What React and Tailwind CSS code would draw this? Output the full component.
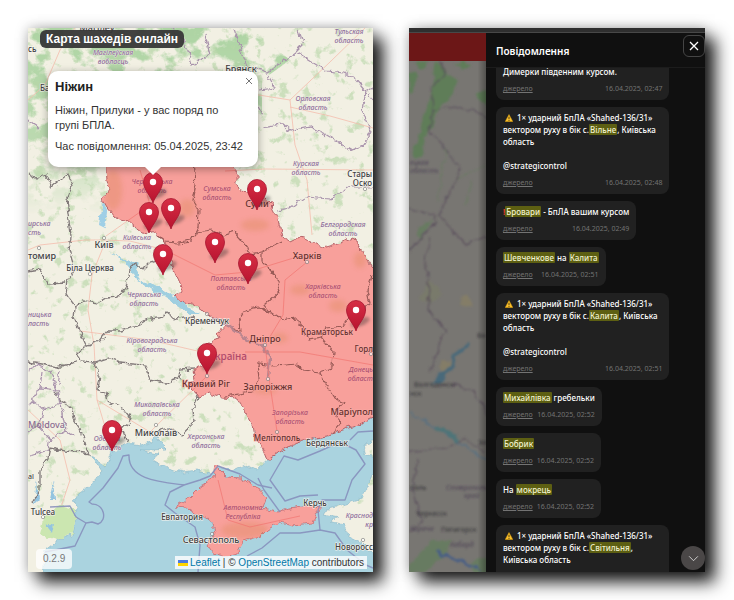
import React from "react";

const AREA = "M105 160 L107 180 L110 190 L103 200 L107 207 L115 217 L120 219 L127 220 L135 227 L142 232 L149 233 L155 231 L157 236 L164 242 L168 250 L170 258 L172 265 L175 272 L180 283 L183 292 L175 297 L182 303 L193 304 L202 310 L213 318 L225 325 L218 333 L220 338 L212 340 L207 343 L200 352 L202 366 L193 370 L195 380 L190 384 L192 390 L200 396 L210 393 L223 397 L237 398 L243 407 L248 417 L253 425 L255 437 L263 448 L268 460 L278 453 L290 445 L307 440 L327 437 L337 432 L357 425 L380 416 L380 272 L373 268 L365 255 L357 240 L352 238 L340 243 L323 248 L310 240 L300 237 L290 242 L282 237 L278 220 L272 208 L270 202 L260 192 L240 190 L237 183 L237 173 L228 160 Z";
const CRIMEA = "M215 465 L213 478 L200 487 L190 497 L183 502 L175 507 L187 508 L197 515 L205 517 L213 523 L215 533 L207 545 L213 553 L225 557 L237 553 L243 542 L260 537 L267 530 L280 522 L293 525 L313 523 L317 513 L322 507 L307 505 L290 508 L278 512 L263 508 L267 498 L253 485 L240 478 L227 477 Z";
const SEA = "M43 580 L45 550 L58 540 L72 535 L77 507 L73 500 L88 487 L102 472 L90 455 L106 466 L112 452 L128 443 L143 445 L153 440 L155 430 L158 440 L167 449 L152 450 L140 450 L158 454 L153 460 L167 468 L183 472 L197 470 L210 473 L222 468 L233 470 L245 464 L257 470 L268 460 L278 453 L290 445 L307 440 L327 437 L337 432 L357 425 L380 416 L380 440 L363 445 L366 455 L380 457 L380 470 L372 475 L367 487 L360 500 L340 505 L328 508 L323 515 L338 518 L330 521 L343 525 L350 537 L363 543 L373 553 L380 560 L380 580 Z";

const BORDERS = [
  "M28 174 L36 178 L46 173 L52 187 L68 174 L72 186 L66 200 L68 214 L71 236 L69 250 L75 270 L68 281 L66 294 L75 306 L84 301 L97 303 L106 298 L118 297 L126 288 L130 270 L135 263 L143 269 L150 262 L157 260 L164 248",
  "M75 306 L74 318 L80 332 L86 345 L77 354 L80 362 L95 363 L108 359 L120 363 L146 365 L150 380 L165 383 L179 378 L181 370 L193 369",
  "M86 345 L100 341 L108 330 L120 330 L135 326 L145 320 L160 318 L167 313 L177 319 L195 317",
  "M28 272 L40 270 L48 284 L66 283",
  "M28 362 L42 364 L56 367 L77 362",
  "M95 363 L100 376 L98 390 L106 392 L108 402 L122 407 L132 420 L122 428 L128 442",
  "M55 391 L61 402 L72 408 L74 420 L82 432 L86 446 L90 454 L76 452 L65 451 L50 448 L48 458 L40 470 L40 490 L33 502",
  "M193 384 L198 398 L193 410 L194 422 L182 435 L177 432 L168 428 L158 431",
];
const AREA_BORDERS = [
  "M157 236 L165 242 L178 243 L192 241 L198 228 L199 210 L193 200 L196 185 L194 160",
  "M196 233 L212 231 L222 236 L235 232 L246 245 L249 254 L262 252",
  "M282 242 L262 252 L262 262 L275 275 L281 290 L265 305 L271 313 L259 307 L245 310 L239 320 L240 332 L230 327",
  "M259 307 L270 312 L282 320 L297 318 L302 326 L309 340 L322 338 L333 352 L332 368 L320 372 L303 370 L297 364 L275 366 L258 364 L260 380 L252 392 L225 396",
  "M322 338 L326 328 L343 326 L352 312 L362 310 L370 303 L367 290 L372 276",
  "M320 372 L327 385 L335 398 L343 402 L336 410 L340 424 L332 434",
];
const ROADS = [
  "M104 240 L85 240 L40 245 L28 250",
  "M104 245 L92 275 L88 310 L94 345 L97 400 L112 450",
  "M104 240 L130 241 L165 250 L215 275 L248 272 L300 256",
  "M307 262 L285 280 L283 315 L265 345 L270 385 L278 438",
  "M97 400 L150 432 L208 375",
  "M28 100 L45 85 L60 50 L75 28",
  "M200 90 L240 92 L290 100 L330 62 L365 28",
  "M290 100 L295 145 L307 180 L312 235",
  "M225 171 L265 169 L373 170",
  "M290 107 L330 116 L373 128",
  "M245 352 L300 352 L373 365",
  "M80 331 L150 340 L206 353",
  "M28 410 L60 440 L70 480 L60 510",
  "M218 480 L228 520 L250 527 L300 516",
  "M140 170 L150 205 L106 236",
];
const OUTER = [
  "M172 28 L186 45 L192 65 L210 55 L205 35",
  "M233 28 L247 66 L268 72 L282 62 L296 52 L312 62 L326 71 L345 73 L355 79 L366 92 L362 110 L371 132 L364 145 L352 150 L340 143 L325 134 L310 127 L290 131 L282 124 L262 127",
  "M259 90 L275 88 L268 75 M262 115 L256 105",
  "M297 28 L303 45 L296 52 M373 87 L367 90 L373 100",
  "M373 187 L350 187 L330 199 L305 197 L290 208 L278 210",
  "M28 120 L40 128 M28 372 L38 364 L50 372 L57 390 L40 388 L32 400 L44 410 L38 425 L28 432 M44 410 L60 404 M38 425 L50 438 L48 450 L30 456 M50 438 L66 430 L74 436 M60 370 L58 385 M32 400 L28 404 M57 390 L60 404 L66 430 M40 388 L42 372",
];
const MARITIME = [
  "M45 552 L75 546 L86 523 L76 517 L70 506 L50 507 M86 523 L92 522 L98 524 C108 520 104 504 92 504 L89 502 L103 488 L118 468 L123 456 L129 455 C128 480 160 482 184 485 L200 480 L210 476 L218 466 L240 474 L258 485 L272 488",
  "M184 485 L170 492 L165 505 L175 513 L195 527 L200 545 L198 572",
  "M247 556 L262 548 L280 533 L300 533 L320 530 L335 533 L347 550 L366 565 L373 568",
  "M320 530 L318 510 L322 500 L345 500 L352 480 L365 464 L356 450 L340 442 L320 451 L298 460 L284 456 L270 480 L285 501 L300 496 L318 495 M350 440 L358 432 L373 431 M258 478 L264 490 L280 512",
];

const REGIONS = [
  [113, 52, "Магілеўская", "вобласць"],
  [349, 31, "Тульская", "область"],
  [313, 98, "Орловская", "область"],
  [306, 163, "Курская", "область"],
  [343, 224, "Белгородская", "область"],
  [137, 237, "Київська", "область"],
  [144, 294, "Черкаська", "область"],
  [152, 340, "Кіровоградська", "область"],
  [157, 404, "Миколаївська", "область"],
  [107, 438, "Одеська", "область"],
  [206, 436, "Херсонська", "область"],
  [28, 223, "ирська", "сть", "start"],
  [28, 314, "ницька", "ласть", "start"],
  [373, 515, "Краснод", "кр", "end"],
];
const RED_REGIONS = [
  [152, 181, "Чернігівська", "область"],
  [217, 188, "Сумська", "область"],
  [231, 278, "Полтавська", "область"],
  [323, 286, "Харківська", "область"],
  [290, 412, "Запорізька", "область"],
  [373, 369, "Донець", "област", "end"],
  [243, 507, "Автономна", "Республіка"],
];
const CITIES = [
  [97, 28, 9, "Магілёў", "middle"],
  [241, 69, 9, "Брянск", "middle"],
  [28, 49, 8, "сь", "start"],
  [40, 88, 8, "Бабруйск", "start"],
  [372, 174, 8, "Стары", "end"],
  [372, 183, 8, "Оско", "end"],
  [104, 245, 9, "Київ", "middle"],
  [28, 256, 9, "томир", "start"],
  [90, 268, 8, "Біла Церква", "middle"],
  [207, 321, 8, "Кременчук", "middle"],
  [156, 433, 9, "Миколаїв", "middle"],
  [43, 512, 8, "Tulcea", "middle"],
  [28, 476, 7, "al", "start"],
  [182, 517, 8, "Евпатория", "middle"],
  [211, 540, 9, "Севастополь", "middle"],
  [315, 503, 8, "Керчь", "middle"],
  [373, 547, 8, "Новоросс", "end"],
  [327, 443, 8, "Бердянськ", "middle"],
];
const RED_CITIES = [
  [257, 204, 9, "Суми", "middle"],
  [307, 256, 9, "Харків", "middle"],
  [327, 332, 8, "Краматорськ", "middle"],
  [373, 349, 8, "Горл", "end"],
  [265, 339, 9, "Дніпро", "middle"],
  [206, 384, 9, "Кривий Ріг", "middle"],
  [268, 387, 9, "Запоріжжя", "middle"],
  [373, 412, 9, "Маріупол", "end"],
  [277, 438, 8, "Мелітополь", "middle"],
];
const TOWNS = [[104, 238], [39, 248], [90, 274], [307, 262], [265, 345], [207, 376], [268, 379], [156, 425], [277, 432], [43, 517], [365, 189], [371, 354], [363, 540], [207, 314], [212, 534]];
const PINS = [[257, 210], [153, 203], [171, 229], [149, 233], [215, 263], [163, 275], [248, 284], [356, 331], [207, 374], [112, 451]];

function RegionLabel({ item, fill, halo }) {
  const [x, y, top, bottom, anchor = "middle"] = item;
  return (
    <text textAnchor={anchor} fontSize="7" fontStyle="italic" fontWeight="500" fill={fill} stroke={halo} strokeWidth="0.6" paintOrder="stroke">
      <tspan x={x} y={y + 3}>{top}</tspan>
      <tspan x={x} y={y + 12}>{bottom}</tspan>
    </text>
  );
}

function CityLabel({ item, fill, halo }) {
  const [x, y, size, name, anchor] = item;
  return (
    <text x={x} y={y + 3} textAnchor={anchor} fontSize={size} fontWeight="500" fill={fill} stroke={halo} strokeWidth="1.2" paintOrder="stroke">{name}</text>
  );
}

function AlertMap() {
  return (
    <svg viewBox="28 28 345 544" preserveAspectRatio="xMidYMid slice" className="block h-full w-full font-['Noto_Sans',sans-serif]" role="img" aria-label="Мапа">
      <defs>
        <filter id="rough" x="-5%" y="-5%" width="110%" height="110%">
          <feTurbulence type="fractalNoise" baseFrequency="0.14" numOctaves="3" seed="4" result="n" />
          <feDisplacementMap in="SourceGraphic" in2="n" scale="7" xChannelSelector="R" yChannelSelector="G" />
        </filter>
        <filter id="forest" x="0" y="0" width="100%" height="100%" colorInterpolationFilters="sRGB">
          <feTurbulence type="fractalNoise" baseFrequency="0.04 0.05" numOctaves="5" seed="12" />
          <feColorMatrix values="0 0 0 0 0.68  0 0 0 0 0.83  0 0 0 0 0.64  7 0 0 0 -3.3" />
          <feComposite in2="SourceGraphic" operator="in" />
        </filter>
        <filter id="grove" x="0" y="0" width="100%" height="100%" colorInterpolationFilters="sRGB">
          <feTurbulence type="fractalNoise" baseFrequency="0.09" numOctaves="4" seed="31" />
          <feColorMatrix values="0 0 0 0 0.72  0 0 0 0 0.84  0 0 0 0 0.66  7 0 0 0 -4.2" />
          <feComposite in2="SourceGraphic" operator="in" />
        </filter>
        <filter id="soft"><feGaussianBlur stdDeviation="2.5" /></filter>
        <filter id="pinshade" x="-50%" y="-50%" width="200%" height="200%"><feGaussianBlur stdDeviation="1.6" /></filter>
        <linearGradient id="woods" x1="0" y1="0" x2="0" y2="1">
          <stop offset="0" stopColor="#fff" /><stop offset="0.6" stopColor="#fff" stopOpacity="0.8" /><stop offset="1" stopColor="#fff" stopOpacity="0" />
        </linearGradient>
        <linearGradient id="pin" x1="0" y1="0" x2="0" y2="1">
          <stop offset="0" stopColor="#d62f45" /><stop offset="1" stopColor="#b8132f" />
        </linearGradient>
        <clipPath id="red"><path d={AREA} /><path d={CRIMEA} /></clipPath>
      </defs>
      <rect x="20" y="20" width="365" height="565" fill="#f2f0e3" />
      <path d="M28 28 H250 L290 60 L262 80 L262 170 H105 V215 L70 205 L28 215 Z" fill="url(#woods)" filter="url(#forest)" />
      <rect x="28" y="28" width="345" height="480" filter="url(#grove)" opacity="0.65" />
      <g fill="none" strokeLinejoin="round">
        {ROADS.map((d) => <path key={d} d={d} stroke="#f4b9aa" strokeWidth="1" opacity="0.75" />)}
      </g>
      <g filter="url(#rough)">
        <path d={SEA} fill="#aad3df" stroke="#86b5c8" strokeWidth="0.6" />
        <path d="M58 540 L72 534 L76 510 L60 505 L45 515 L40 535 Z" fill="#cbe6b0" />
        <path d="M46 526 L54 524 L52 534 Z M34 505 L37 480 L39 500 Z M50 500 L54 482 L56 500 Z" fill="#94c4e0" />
        <path d="M103 200 L107 212 L105 228 L99 225 L101 210 Z" fill="#9fcfe6" />
        <path d="M110 250 L124 260 L132 262 L137 260 L141 266 L137 272 L140 280 L153 284 L168 292 L182 303 L200 314 L190 314 L172 303 L158 294 L145 285 L136 278 L128 266 Z" fill="#9fcfe0" />
        <g fill="none">
          {BORDERS.map((d) => <path key={d} d={d} stroke="#827a7a" strokeWidth="1.3" />)}
          {OUTER.map((d) => <path key={d} d={d} stroke="#a993ac" strokeWidth="1.2" />)}
        </g>
        <path d={AREA} fill="#f8a09b" stroke="#b5646a" strokeWidth="1" />
        <path d={CRIMEA} fill="#f8a09b" stroke="#c56a70" strokeWidth="0.8" />
        <g fill="none">
          {AREA_BORDERS.map((d) => <path key={d} d={d} stroke="#995a57" strokeWidth="1.2" />)}
          <path d="M213 318 L230 327 L248 341 L262 346 L270 358 L268 378" stroke="#b9858f" strokeWidth="2.4" />
        </g>
      </g>
      <g clipPath="url(#red)">
        <g filter="url(#soft)" fill="#d8864f" opacity="0.3">
          <ellipse cx="113" cy="190" rx="9" ry="20" /><ellipse cx="255" cy="225" rx="14" ry="6" /><ellipse cx="300" cy="290" rx="10" ry="5" /><ellipse cx="338" cy="306" rx="9" ry="6" /><ellipse cx="360" cy="260" rx="6" ry="8" /><ellipse cx="280" cy="338" rx="8" ry="5" /><ellipse cx="245" cy="530" rx="24" ry="8" /><ellipse cx="187" cy="208" rx="8" ry="9" /><ellipse cx="265" cy="390" rx="12" ry="4" />
        </g>
        <g fill="none" stroke="#f0706c" strokeWidth="0.9" opacity="0.7">
          {ROADS.map((d) => <path key={d} d={d} />)}
        </g>
      </g>
      <g fill="none" stroke="#858dbb" strokeWidth="1.4" strokeLinejoin="round" opacity="0.85">
        {MARITIME.map((d) => <path key={d} d={d} />)}
      </g>
      {TOWNS.map(([x, y]) => <circle key={x + "-" + y} cx={x} cy={y} r="1.7" fill="#fff" fillOpacity="0.6" stroke="#777" strokeWidth="0.6" />)}
      {REGIONS.map((item) => <RegionLabel key={item[2]} item={item} fill="#8f6f99" halo="#f4f1ea" />)}
      {RED_REGIONS.map((item) => <RegionLabel key={item[2]} item={item} fill="#ad4f70" halo="#f9aaa5" />)}
      {CITIES.map((item) => <CityLabel key={item[3]} item={item} fill="#404040" halo="#f6f4ef" />)}
      {RED_CITIES.map((item) => <CityLabel key={item[3]} item={item} fill="#64302e" halo="#f9aaa5" />)}
      <text x="28" y="428" fontSize="9" fontWeight="500" fill="#8b6b92">Moldova</text>
      <text x="247" y="360" textAnchor="end" fontSize="10" fontWeight="500" fill="#b04a6c">Україна</text>
      {PINS.map(([x, y]) => (
        <g key={x} transform={"translate(" + x + " " + y + ")"}>
          <ellipse cx="7" cy="-7" rx="10" ry="4" transform="rotate(-20)" fill="#222" opacity="0.35" filter="url(#pinshade)" />
          <path d="M0 0 C-2 -7 -9.5 -13 -9.5 -21 A9.5 9.5 0 0 1 9.5 -21 C9.5 -13 2 -7 0 0 Z" fill="url(#pin)" stroke="#a81530" strokeWidth="0.8" />
          <circle cx="0" cy="-21" r="3.2" fill="#fff" />
        </g>
      ))}
    </svg>
  );
}

function DimMap() {
  return (
    <svg viewBox="409 61 77 511" preserveAspectRatio="xMinYMin slice" className="block h-full w-full font-['Noto_Sans',sans-serif]" aria-hidden="true">
      <defs>
        <filter id="haze"><feGaussianBlur stdDeviation="0.8" /></filter>
        <filter id="jag" x="-10%" y="-5%" width="120%" height="110%">
          <feTurbulence type="fractalNoise" baseFrequency="0.1" numOctaves="3" seed="9" result="n" />
          <feDisplacementMap in="SourceGraphic" in2="n" scale="8" xChannelSelector="R" yChannelSelector="G" />
          <feGaussianBlur stdDeviation="0.8" />
        </filter>
        <linearGradient id="edge"><stop offset="0.88" stopOpacity="0" /><stop offset="1" stopOpacity="0.35" /></linearGradient>
      </defs>
      <rect x="400" y="50" width="100" height="530" fill="#787672" />
      <g filter="url(#jag)">
        <g fill="#5f7d59">
          <path d="M437 61 L447 75 L458 80 L455 95 L442 104 L432 122 L422 152 L417 160 L412 156 L420 132 L425 112 L433 92 Z" />
          <path d="M409 72 L417 76 L415 90 L409 92 Z M478 92 L488 90 L488 106 L480 103 Z M455 62 L472 64 L462 70 Z M415 62 L430 61 L420 70 Z" />
          <path d="M418 228 L432 220 L420 240 Z M409 565 L430 542 L452 540 L445 556 L425 572 L409 574 Z M470 562 L488 555 L488 574 L475 574 Z" opacity="0.7" />
        </g>
        <g fill="#8c8260" opacity="0.6"><circle cx="466" cy="301" r="5" /><circle cx="446" cy="366" r="6" /></g>
        <path d="M430 280 L442 292 L434 302 L418 300" fill="#7b805f" opacity="0.4" />
        <g fill="none" stroke="#5a4f5c" strokeWidth="1.1">
          <path d="M440 61 L444 75 L432 88 L434 110 L428 128 L446 150 L460 168 L456 180 L446 200 L440 216 L452 230 L466 244 L488 236" />
          <path d="M409 208 L425 214 L438 217 L420 240 L409 250 M434 110 L455 106 L475 112 L488 118" />
          <path d="M430 236 L426 260 L430 290 L428 310 L445 328 L438 350 L430 370 M452 384 L470 390 L480 402 L488 418 M409 452 L440 448 L466 440 L486 452 M418 460 L412 490 L422 520 L409 534" />
        </g>
        <path d="M456 180 L470 172 L486 165 M472 180 L466 206 M446 150 L438 200" fill="none" stroke="#6a7a63" strokeWidth="1.2" />
        <path d="M468 345 L461 350 L455 358 L450 367 L445 378 L434 383 L439 375 L450 370 L453 360 Z" fill="#48697a" stroke="#48697a" strokeWidth="3" />
        <path d="M409 413 L425 420 L437 429 L453 438 L463 445 L488 462" fill="none" stroke="#5b7180" strokeWidth="1.6" />
        <path d="M437 429 L450 434 L458 441" fill="none" stroke="#4e7478" strokeWidth="4" />
        <path d="M437 549 L440 555 L450 556 L463 562 L480 569" fill="none" stroke="#4a5f85" strokeWidth="3" />
      </g>
      <g filter="url(#haze)" fontSize="7" fill="#333136">
        <g fill="#4d4254" fontStyle="italic">
          <text x="410" y="165">ецкая</text><text x="410" y="173">область</text>
          <text x="446" y="490">Ставрополь</text><text x="464" y="498">край</text>
          <text x="410" y="531">Карача</text><text x="450" y="547">Кабард</text>
        </g>
        <text x="477" y="338">Во</text><text x="414" y="387">Волгодонск</text><text x="410" y="396">нск</text>
        <text x="478" y="445">Эл</text><text x="410" y="490">поль</text><text x="416" y="516">Черкесск</text><text x="441" y="532">Пятигорск</text>
      </g>
      <rect x="409" y="61" width="78" height="515" fill="url(#edge)" />
    </svg>
  );
}

function Warning() {
  return (
    <svg viewBox="0 0 16 16" className="mx-[2px] inline-block h-2 w-2 align-[-1px]" aria-label="Увага" role="img">
      <path d="M8 1 L15.5 15 H0.5 Z" fill="#fbc02d" stroke="#e5a50a" strokeWidth="1" strokeLinejoin="round" />
      <path d="M8 5.5 V10.5 M8 12 V13.8" stroke="#3b2f10" strokeWidth="1.8" />
    </svg>
  );
}

function Mark({ children }) {
  return <mark className="rounded-[1px] bg-[#5d5f12] px-px text-[#f1f2cf]">{children}</mark>;
}

function Strike({ place, rest }) {
  return (
    <>
      <Warning /> 1× ударний БпЛА «Shahed-136/31»{"\n"}вектором руху в бік с.<Mark>{place}</Mark>{rest}{"\n\n"}@strategicontrol
    </>
  );
}

const MESSAGES = [
  { time: "02:47", wide: true, body: "Димерки південним курсом." },
  { time: "02:48", wide: true, body: <Strike place="Вільне" rest={", Київська\nобласть"} /> },
  { time: "02:49", body: <><span className="font-bold text-[#e0392b]">!</span><Mark>Бровари</Mark> - БпЛА вашим курсом</> },
  { time: "02:51", body: <><Mark>Шевченкове</Mark> на <Mark>Калита</Mark></> },
  { time: "02:51", wide: true, body: <Strike place="Калита" rest={", Київська\nобласть"} /> },
  { time: "02:52", body: <><Mark>Михайлівка</Mark> гребельки</> },
  { time: "02:52", body: <Mark>Бобрик</Mark> },
  { time: "02:52", body: <>На <Mark>мокрець</Mark></> },
  { time: "02:53", wide: true, body: <Strike place="Світильня" rest={",\nКиївська область"} /> },
];

function Message({ item }) {
  return (
    <li className={(item.wide ? "w-[83%]" : "max-w-[83%]") + " shrink-0 rounded-lg bg-[#212121] px-[7px] pt-[5px] pb-[6px]"}>
      <p className="text-[8px] leading-[12px] font-medium whitespace-pre text-white">{item.body}</p>
      <div className="mt-[6px] flex items-center justify-between gap-[4px] text-[7px] leading-[10px] whitespace-nowrap text-[#737373]">
        <a href="#source" className="underline">джерело</a>
        <time>16.04.2025, {item.time}</time>
      </div>
    </li>
  );
}

export default function App() {
  const shadow = "shadow-[10px_10px_16px_rgba(0,0,0,0.9),0_0_12px_rgba(0,0,0,0.25)]";
  return (
    <main className="grid h-screen grid-cols-[345fr_296fr] gap-9 overflow-hidden bg-white py-7 pr-[29px] pl-7">
      <section className={"relative min-h-0 overflow-hidden font-['Liberation_Sans',sans-serif] " + shadow}>
        <AlertMap />
        <h1 className="absolute top-[2px] left-3 rounded-md bg-[#373737]/95 px-[6px] text-[12px] leading-[18px] font-bold whitespace-nowrap text-white">Карта шахедів онлайн</h1>
        <div className="absolute top-[43px] left-5 h-24 w-[210px] rounded-[10px] bg-white px-[7px] pt-2 text-[11px] leading-[15px] text-[#333] shadow-[0_2px_8px_rgba(0,0,0,0.35)]">
          <h2 className="text-[13px] leading-4 font-bold text-[#222]">Ніжин</h2>
          <p className="mt-2 whitespace-pre">{"Ніжин, Прилуки - у вас поряд по\nгрупі БПЛА."}</p>
          <p className="mt-[6px] whitespace-nowrap">Час повідомлення: 05.04.2025, 23:42</p>
          <button type="button" aria-label="Закрити" className="absolute top-[6px] right-[5px] h-2 w-2 text-[#757575]">
            <svg viewBox="0 0 8 8" className="h-2 w-2"><path d="M1 1 L7 7 M7 1 L1 7" stroke="currentColor" strokeWidth="1" /></svg>
          </button>
          <svg viewBox="0 0 16 8" className="absolute top-full left-[97px] h-2 w-4"><path d="M0 0 H16 L8 8 Z" fill="#fff" /></svg>
        </div>
        <div className="absolute bottom-[3px] left-2 rounded-sm bg-white/75 px-[7px] text-[10px] leading-5 text-[#777]">0.2.9</div>
        <div className="absolute right-[6px] bottom-[3px] flex items-center bg-white/80 px-[3px] text-[10px] leading-[13px] whitespace-nowrap text-[#333]">
          <svg viewBox="0 0 10 6" className="mr-[2px] h-[6px] w-[10px]"><path fill="#4c7be1" d="M0 0h10v3H0z" /><path fill="#ffd500" d="M0 3h10v3H0z" /></svg>
          <a href="#leaflet" className="text-[#0078a8]">Leaflet</a>
          <span className="whitespace-pre"> | © </span>
          <a href="#osm" className="text-[#0078a8]">OpenStreetMap</a>
          <span className="whitespace-pre"> contributors</span>
        </div>
      </section>

      <section className={"flex min-h-0 flex-col overflow-hidden bg-[#101010] font-['Noto_Sans',sans-serif] " + shadow}>
        <div className="h-[5px] shrink-0 border-b border-[#484848] bg-[#2f2f2f]" />
        <div className="flex min-h-0 flex-1">
          <div className="flex min-w-0 flex-1 flex-col">
            <div className="h-7 shrink-0 bg-[#6c1717]" />
            <div className="min-h-0 flex-1"><DimMap /></div>
          </div>
          <aside className="relative flex w-[74%] min-w-0 flex-col bg-[#101010]">
            <header className="flex h-[35px] shrink-0 items-start justify-between border-b border-[#1c1c1c] pt-[2px] pl-[10px]">
              <h2 className="text-[10px] leading-8 font-semibold text-white">Повідомлення</h2>
              <button type="button" aria-label="Закрити" className="flex h-[22px] w-[22px] items-center justify-center rounded-md border border-[#454545] text-white">
                <svg viewBox="0 0 10 10" className="h-[10px] w-[10px]"><path d="M1 1 L9 9 M9 1 L1 9" stroke="currentColor" strokeWidth="1.3" /></svg>
              </button>
            </header>
            <div className="min-h-0 flex-1 overflow-hidden">
              <ul className="-mt-[7px] flex flex-col items-start gap-[7px] pl-[10px]">
                {MESSAGES.map((item, i) => <Message key={i} item={item} />)}
              </ul>
            </div>
            <button type="button" aria-label="Донизу" className="absolute right-0 bottom-[2px] flex h-6 w-6 items-center justify-center rounded-full bg-[#4a4747] text-[#ddd]">
              <svg viewBox="0 0 12 8" className="h-[7px] w-[11px]"><path d="M1 1.5 L6 6.5 L11 1.5" fill="none" stroke="currentColor" strokeWidth="1" /></svg>
            </button>
          </aside>
        </div>
      </section>
    </main>
  );
}
